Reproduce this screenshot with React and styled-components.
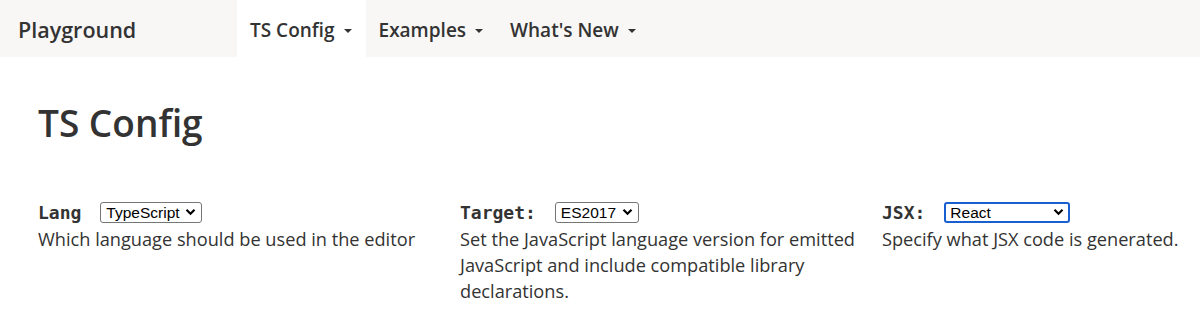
import React from 'react'
import styled, { createGlobalStyle } from 'styled-components'

const GlobalStyle = createGlobalStyle`
  body {
    margin: 0;
    background: #fff;
    color: #333;
    font-family: 'Open Sans', 'Noto Sans', sans-serif;
  }
`

const Navbar = styled.nav`
  display: flex;
  align-items: stretch;
  height: 57px;
  background-color: #f8f7f6;
`

const Brand = styled.div`
  display: flex;
  align-items: center;
  padding: 2px 18px 0;
  width: 237px;
  box-sizing: border-box;
  font-size: 21.5px;
  font-weight: 600;
  color: #333;
`

const NavItem = styled.div`
  display: flex;
  align-items: center;
  gap: 9px;
  padding: 3px 14px 0 13px;
  font-size: 19px;
  font-weight: 600;
  color: #333;
  background: ${p => (p.$active ? '#fff' : 'transparent')};
`

const Caret = styled.span`
  width: 0;
  height: 0;
  margin-top: 2px;
  border-left: 4.5px solid transparent;
  border-right: 4.5px solid transparent;
  border-top: 4.5px solid #333;
`

const Main = styled.main`
  padding: 0 0 0 38px;
`

const Title = styled.h1`
  margin: 44px 0 54px;
  font-size: 37px;
  font-weight: 600;
  line-height: 1.2;
  color: #333;
`

const Options = styled.div`
  display: grid;
  grid-template-columns: 400px 400px 1fr;
  column-gap: 22px;
`

const Option = styled.div`
  display: flex;
  flex-direction: column;
`

const OptionHead = styled.div`
  display: flex;
  align-items: center;
  height: 26px;
`

const Label = styled.label`
  font-family: 'DejaVu Sans Mono', 'Liberation Mono', monospace;
  font-weight: bold;
  font-size: 18px;
  color: #333;
  margin-right: 19px;
`

const SelectWrap = styled.span`
  position: relative;
  display: inline-flex;
`

const Select = styled.select`
  appearance: none;
  font-family: 'Liberation Sans', Arial, sans-serif;
  font-size: 15.5px;
  height: 21px;
  width: ${p => p.$width}px;
  box-sizing: border-box;
  border-radius: 3px;
  color: #000;
  background: #fff;
  padding: 0 0 0 ${p => (p.$focused ? 4 : 5)}px;
  border: ${p => (p.$focused ? '2px solid #1a5fd0' : '1px solid #767676')};
  outline: none;
`

const Chevron = styled.svg`
  position: absolute;
  right: 6px;
  top: 6px;
  pointer-events: none;
`

const Desc = styled.p`
  margin: 1px 0 0;
  font-size: 18.2px;
  line-height: 26px;
  color: #333;
`

const options = [
  {
    label: 'Lang',
    value: 'TypeScript',
    width: 102,
    desc: 'Which language should be used in the editor',
  },
  {
    label: 'Target:',
    value: 'ES2017',
    width: 84,
    desc: 'Set the JavaScript language version for emitted JavaScript and include compatible library declarations.',
  },
  {
    label: 'JSX:',
    value: 'React',
    width: 126,
    focused: true,
    desc: 'Specify what JSX code is generated.',
  },
]

const App = () => {
  return (
    <>
      <GlobalStyle />
      <Navbar>
        <Brand>Playground</Brand>
        <NavItem $active>TS Config <Caret /></NavItem>
        <NavItem>Examples <Caret /></NavItem>
        <NavItem>What's New <Caret /></NavItem>
      </Navbar>
      <Main>
        <Title>TS Config</Title>
        <Options>
          {options.map(o => (
            <Option key={o.label}>
              <OptionHead>
                <Label>{o.label}</Label>
                <SelectWrap>
                  <Select $width={o.width} $focused={o.focused} defaultValue={o.value}>
                    <option>{o.value}</option>
                  </Select>
                  <Chevron width="11" height="8" viewBox="0 0 11 8">
                    <path d="M1.5 1.8 L5.5 5.8 L9.5 1.8" fill="none" stroke="#000" strokeWidth="2.2" />
                  </Chevron>
                </SelectWrap>
              </OptionHead>
              <Desc>{o.desc}</Desc>
            </Option>
          ))}
        </Options>
      </Main>
    </>
  )
}

export default App
